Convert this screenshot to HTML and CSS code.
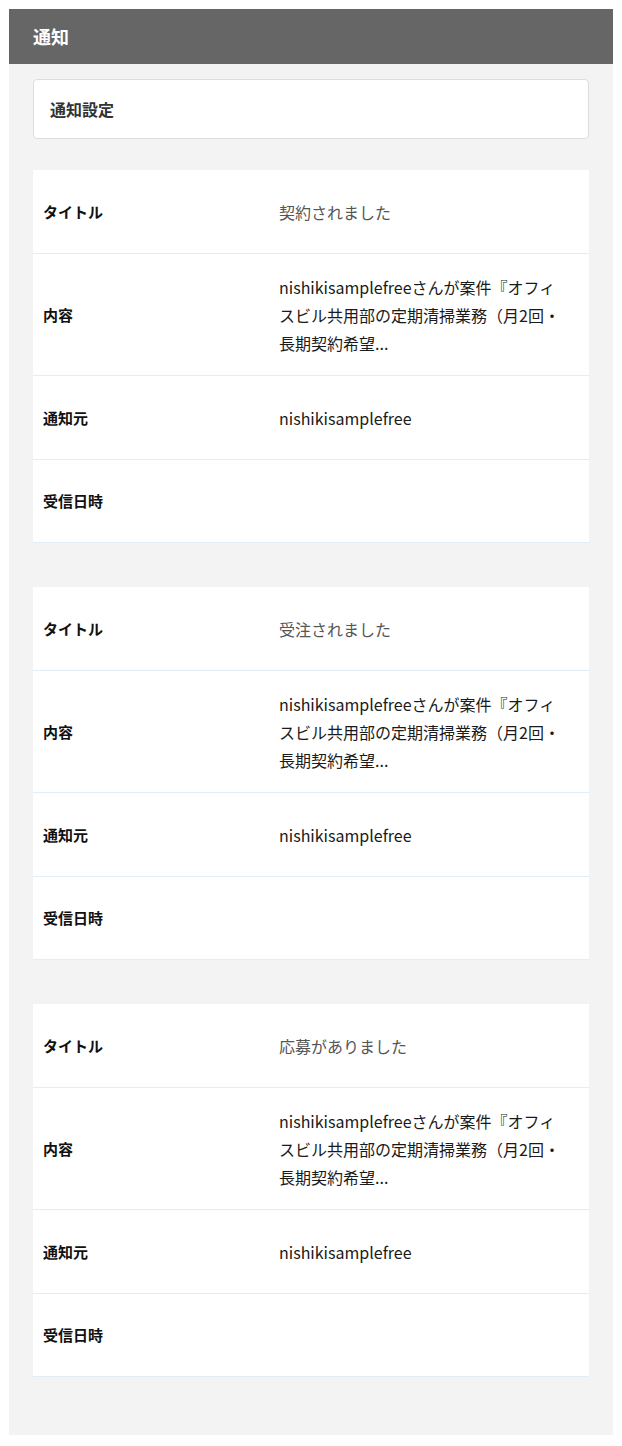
FILE: index.html
```html
<!DOCTYPE html>
<html lang="ja">
<head>
<meta charset="utf-8">
<title>通知</title>
<link rel="stylesheet" href="styles.css">
</head>
<body>
<div class="page">
  <header class="page-header">通知</header>
  <main class="page-body">
    <div class="settings-card">通知設定</div>

    <section class="notice-card">
      <div class="row">
        <div class="label">タイトル</div>
        <div class="value value-title">契約されました</div>
      </div>
      <div class="row row-content">
        <div class="label">内容</div>
        <div class="value">nishikisamplefreeさんが案件『オフィスビル共用部の定期清掃業務（月2回・長期契約希望...</div>
      </div>
      <div class="row">
        <div class="label">通知元</div>
        <div class="value">nishikisamplefree</div>
      </div>
      <div class="row row-last">
        <div class="label">受信日時</div>
        <div class="value"></div>
      </div>
    </section>

    <section class="notice-card">
      <div class="row">
        <div class="label">タイトル</div>
        <div class="value value-title">受注されました</div>
      </div>
      <div class="row row-content">
        <div class="label">内容</div>
        <div class="value">nishikisamplefreeさんが案件『オフィスビル共用部の定期清掃業務（月2回・長期契約希望...</div>
      </div>
      <div class="row">
        <div class="label">通知元</div>
        <div class="value">nishikisamplefree</div>
      </div>
      <div class="row row-last">
        <div class="label">受信日時</div>
        <div class="value"></div>
      </div>
    </section>

    <section class="notice-card">
      <div class="row">
        <div class="label">タイトル</div>
        <div class="value value-title">応募がありました</div>
      </div>
      <div class="row row-content">
        <div class="label">内容</div>
        <div class="value">nishikisamplefreeさんが案件『オフィスビル共用部の定期清掃業務（月2回・長期契約希望...</div>
      </div>
      <div class="row">
        <div class="label">通知元</div>
        <div class="value">nishikisamplefree</div>
      </div>
      <div class="row row-last">
        <div class="label">受信日時</div>
        <div class="value"></div>
      </div>
    </section>
  </main>
</div>
</body>
</html>
```

FILE: styles.css
```css
html, body {
  margin: 0;
  padding: 0;
  background: #ffffff;
}

body {
  padding: 9px;
  font-family: "Noto Sans CJK JP", "Noto Sans", sans-serif;
  color: #111111;
}

.page {
  background: #f3f3f3;
}

.page-header {
  height: 55px;
  background: #666666;
  color: #ffffff;
  font-size: 18px;
  font-weight: 700;
  line-height: 55px;
  padding: 0 24px;
}

.page-body {
  padding: 15px 24px 14px;
}

.settings-card {
  background: #ffffff;
  border: 1px solid #dddddd;
  border-radius: 4px;
  height: 58px;
  line-height: 58px;
  padding: 0 16px;
  font-size: 16px;
  font-weight: 700;
  color: #333333;
  margin-bottom: 31px;
}

.notice-card {
  background: #ffffff;
  margin-bottom: 44px;
}

.row {
  display: grid;
  grid-template-columns: 236px 286px;
  align-items: center;
  min-height: 83px;
  padding: 0 10px;
  border-bottom: 1px solid #e1edf7;
}

.row-content {
  min-height: 121px;
}

.row-last {
  min-height: 82px;
}

.label {
  font-size: 15px;
  font-weight: 700;
  color: #111111;
  line-height: 22px;
}

.value {
  font-size: 16px;
  line-height: 28px;
  color: #1a1a1a;
}

.value-title {
  color: #555555;
}
```
